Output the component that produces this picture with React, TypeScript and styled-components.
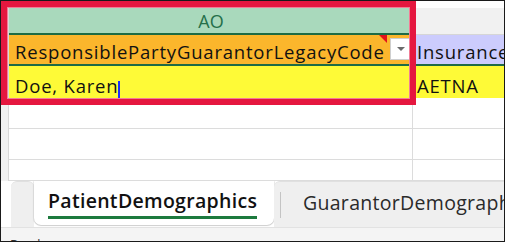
import React from "react";
import styled, { createGlobalStyle } from "styled-components";

const GlobalStyle = createGlobalStyle`
  html, body {
    margin: 0;
    padding: 0;
    background: #ffffff;
  }
  body {
    font-family: "Open Sans", "Noto Sans", sans-serif;
  }
`;

const Frame = styled.div`
  position: relative;
  width: 505px;
  height: 242px;
  box-sizing: border-box;
  border: 1px solid #1a1a1a;
  overflow: hidden;
  display: flex;
  flex-direction: column;
  background: #ffffff;
`;

const Sheet = styled.div`
  height: 180px;
  flex: none;
  display: grid;
  grid-template-columns: 8px 404px 1fr;
  grid-template-rows: 7px 27px 29px 34px 31px 31px 1fr;
  overflow: hidden;
`;

const TopStrip = styled.div`
  grid-column: 1 / -1;
  background: #ffffff;
`;

const RowHead = styled.div`
  background: #f1f1f1;
  border-right: 1px solid #d8d8d8;
`;

const ColHead = styled.div<{ $active?: boolean }>`
  display: flex;
  align-items: flex-end;
  justify-content: center;
  padding-bottom: 3px;
  box-sizing: border-box;
  font-family: "Open Sans", sans-serif;
  font-size: 18px;
  line-height: 1;
  background: ${(p) => (p.$active ? "#a9d9bc" : "#f1f1f1")};
  color: ${(p) => (p.$active ? "#25704a" : "#444")};
  border-bottom: ${(p) => (p.$active ? "2px solid #1e6b45" : "1px solid #d6d6d6")};
  border-left: ${(p) => (p.$active ? "none" : "2px solid #ffffff")};
`;

const Cell = styled.div<{ $bg?: string; $topLine?: boolean; $grid?: boolean }>`
  position: relative;
  display: flex;
  align-items: flex-end;
  box-sizing: border-box;
  padding: 0 0 3px 6px;
  white-space: nowrap;
  overflow: hidden;
  font-family: "Open Sans", sans-serif;
  font-size: 18.5px;
  letter-spacing: 0.8px;
  line-height: 1;
  color: #111;
  background: ${(p) => p.$bg || "#ffffff"};
  border-top: ${(p) => (p.$topLine ? "2px solid #1e6b45" : "none")};
  border-bottom: ${(p) => (p.$grid ? "1px solid #dcdcdc" : "none")};
  border-right: ${(p) => (p.$grid ? "1px solid #dcdcdc" : "none")};
`;

const SideCell = styled(Cell)`
  padding-left: 4px;
  border-right: none;
`;

const CommentMark = styled.span`
  position: absolute;
  top: 0;
  right: 26px;
  width: 0;
  height: 0;
  border-top: 8px solid #e3141c;
  border-left: 8px solid transparent;
`;

const FilterButton = styled.span`
  position: absolute;
  top: 3px;
  right: 2px;
  width: 21px;
  height: 22px;
  box-sizing: border-box;
  background: #ffffff;
  border: 1px solid #cfcfcf;
  display: flex;
  align-items: center;
  justify-content: center;

  &::after {
    content: "";
    width: 0;
    height: 0;
    border-left: 4px solid transparent;
    border-right: 4px solid transparent;
    border-top: 4px solid #6b6b6b;
  }
`;

const Caret = styled.span`
  display: inline-block;
  width: 2px;
  height: 19px;
  margin-left: 0;
  margin-bottom: -5px;
  background: #1b2cff;
`;

const Highlight = styled.div`
  position: absolute;
  left: 0;
  top: 0;
  width: 415px;
  height: 104px;
  box-sizing: border-box;
  border: 6px solid #e5173f;
  box-shadow: inset 0 0 0 1px #f27d96;
  pointer-events: none;
`;

const TabBar = styled.div`
  height: 46px;
  flex: none;
  display: flex;
  padding-left: 10px;
  background: #ffffff;
`;

const TabPiece = styled.div<{ $grow?: boolean; $width?: number }>`
  flex: ${(p) => (p.$grow ? "1" : "none")};
  width: ${(p) => (p.$width ? `${p.$width}px` : "auto")};
  display: flex;
  align-items: center;
  overflow: hidden;
  background: #efefef;
  border-top: 1px solid #e0e0e0;
  border-radius: ${(p) => (p.$grow ? "6px 0 0 0" : "6px 6px 0 0")};
`;

const ActiveTab = styled.div`
  flex: none;
  width: 240px;
  height: 44px;
  box-sizing: border-box;
  display: flex;
  align-items: center;
  padding: 0 0 0 14px;
  background: #ffffff;
  border-radius: 0 0 7px 7px;
  box-shadow: 0 1px 1px rgba(0, 0, 0, 0.18), 1px 0 1px rgba(0, 0, 0, 0.08),
    -1px 0 1px rgba(0, 0, 0, 0.08);
`;

const TabLabel = styled.span<{ $active?: boolean }>`
  font-family: "Open Sans", sans-serif;
  font-size: 19.5px;
  letter-spacing: 0.3px;
  font-weight: ${(p) => (p.$active ? 600 : 400)};
  color: ${(p) => (p.$active ? "#111" : "#2a2a2a")};
  white-space: nowrap;
  padding-bottom: 2px;
  border-bottom: ${(p) => (p.$active ? "3px solid #1d7a3e" : "3px solid transparent")};
`;

const TabSeparator = styled.span`
  flex: none;
  width: 1px;
  height: 26px;
  margin: 0 22px 0 6px;
  background: #c4c4c4;
`;

const StatusBar = styled.div`
  flex: 1;
  background: #f4f4f4;
  border-top: 1px solid #e2e2e2;
  padding: 10px 0 0 9px;
  font-family: "Open Sans", sans-serif;
  font-size: 13px;
  line-height: 1;
  color: #333;
`;

export default function App() {
  return (
    <>
      <GlobalStyle />
      <Frame>
        <Sheet>
          <TopStrip />

          <RowHead />
          <ColHead $active>AO</ColHead>
          <ColHead />

          <RowHead />
          <Cell $bg="#fbb62c">
            ResponsiblePartyGuarantorLegacyCode
            <CommentMark />
            <FilterButton />
          </Cell>
          <SideCell $bg="#ccccfd">Insurance</SideCell>

          <RowHead />
          <Cell $bg="#fefa37" $topLine>
            Doe, Karen
            <Caret />
          </Cell>
          <SideCell $bg="#fefa37" $topLine>
            AETNA
          </SideCell>

          <RowHead />
          <Cell $grid />
          <SideCell $grid />

          <RowHead />
          <Cell $grid />
          <SideCell $grid />

          <RowHead />
          <Cell $grid />
          <SideCell $grid />
        </Sheet>

        <TabBar>
          <TabPiece $width={23} />
          <ActiveTab>
            <TabLabel $active>PatientDemographics</TabLabel>
          </ActiveTab>
          <TabPiece $grow>
            <TabSeparator />
            <TabLabel>GuarantorDemographics</TabLabel>
          </TabPiece>
        </TabBar>

        <StatusBar>Ready</StatusBar>

        <Highlight />
      </Frame>
    </>
  );
}
